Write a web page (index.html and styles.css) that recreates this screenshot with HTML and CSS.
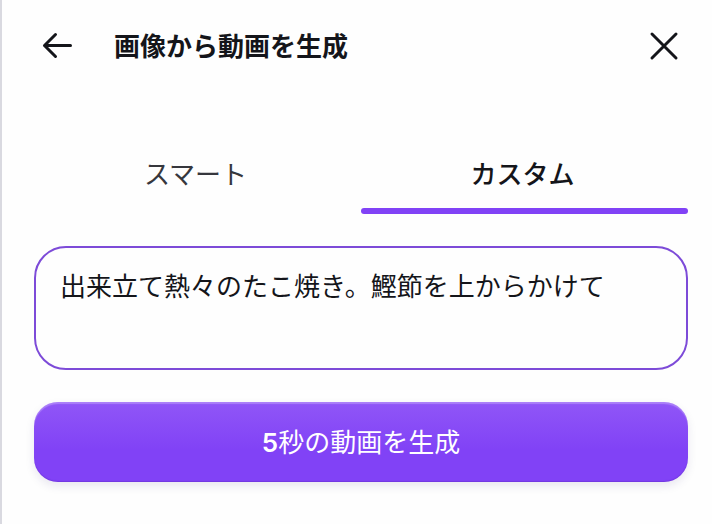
FILE: index.html
```html
<!DOCTYPE html>
<html lang="ja">

<head>
  <meta charset="UTF-8" />
  <meta name="viewport" content="width=device-width, initial-scale=1.0" />
  <title>画像から動画を生成</title>
  <link rel="stylesheet" href="styles.css">
</head>

<body>
  <main class="panel">
    <!-- Header -->
    <header class="header">
      <button class="icon-button" type="button" aria-label="戻る">
        <svg width="48" height="48" viewBox="0 0 48 48">
          <path d="M21.500 12.500 10.500 23.500 21.500 34.500M10.500 23.500H36.500" />
        </svg>
      </button>
      <h1 class="title">画像から動画を生成</h1>
      <button class="icon-button" type="button" aria-label="閉じる">
        <svg width="48" height="48" viewBox="0 0 48 48">
          <path d="M12 12 36 36M36 12 12 36" />
        </svg>
      </button>
    </header>

    <!-- Tabs -->
    <div class="tabs" role="tablist">
      <button class="tab" type="button" role="tab" aria-selected="false">スマート</button>
      <button class="tab active" type="button" role="tab" aria-selected="true">カスタム</button>
    </div>

    <!-- Prompt -->
    <form class="form">
      <textarea class="prompt" aria-label="プロンプト" spellcheck="false">出来立て熱々のたこ焼き。鰹節を上からかけて</textarea>
      <button class="generate" type="button"><span class="seconds">5</span>秒の動画を生成</button>
    </form>
  </main>
</body>

</html>
```
FILE: styles.css
```css
* {
  margin: 0;
  padding: 0;
  box-sizing: border-box;
}

body {
  background-color: #fefefe;
  color: #14151a;
  font-family: "Inter", "Noto Sans CJK JP", sans-serif;
  font-size: 26px;
  line-height: 40px;
}

button,
textarea {
  font: inherit;
  color: inherit;
  border: none;
  background: none;
}

button {
  cursor: pointer;
}

.panel {
  min-height: 100vh;
  padding: 22px 24px 40px 32px;
  border-left: 2px solid #d9d9e0;
}

/* Header */
.header {
  display: flex;
  align-items: center;
}

.icon-button {
  width: 48px;
  height: 48px;
}

.icon-button svg {
  display: block;
  fill: none;
  stroke: #14151a;
  stroke-width: 3;
  stroke-linecap: round;
  stroke-linejoin: round;
}

.title {
  flex: 1;
  padding-top: 2px;
  padding-left: 32px;
  font-size: 26px;
  font-weight: 600;
}

/* Tabs */
.tabs {
  display: flex;
  margin-top: 72px;
}

.tab {
  flex: 1;
  height: 72px;
  padding-right: 4px;
  border-bottom: 6px solid transparent;
  color: #36373d;
}

.tab.active {
  position: relative;
  color: #14151a;
  font-weight: 500;
}

.tab.active::after {
  content: "";
  position: absolute;
  left: 0;
  right: 0;
  bottom: -6px;
  height: 6px;
  border-radius: 3px;
  background-color: #8142f6;
}

/* Prompt */
.form {
  display: flex;
  flex-direction: column;
  gap: 32px;
  margin-top: 32px;
}

.prompt {
  width: 100%;
  height: 124px;
  padding: 19px 24px;
  border: 2px solid #7d4bd8;
  border-radius: 32px;
  outline: none;
  resize: none;
}

.generate {
  height: 80px;
  padding-top: 2px;
  border-radius: 24px;
  background: linear-gradient(#9056f7, #8142f6 60%);
  box-shadow: 0 4px 10px rgba(40, 30, 110, 0.1), inset 0 2px 1px rgba(255, 255, 255, 0.25), inset 0 -1px 1px rgba(80, 30, 180, 0.3);
  color: #fff;
}

.seconds {
  font-weight: 600;
}
```
